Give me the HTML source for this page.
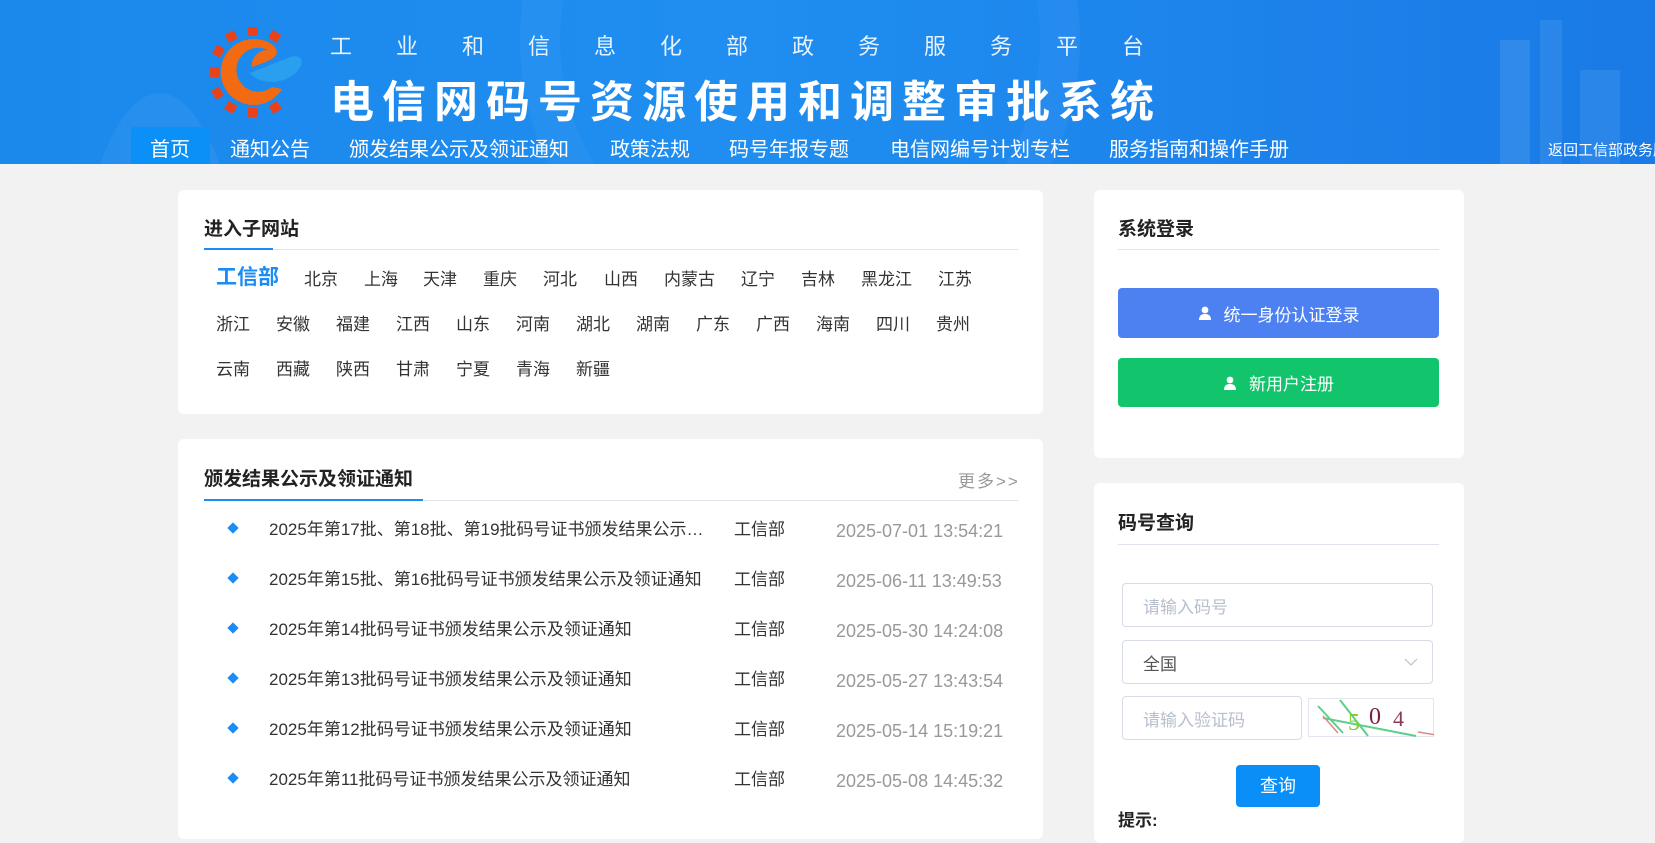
<!DOCTYPE html>
<html><head><meta charset="utf-8"><style>
*{margin:0;padding:0;box-sizing:border-box}
body{width:1655px;height:826px;overflow:hidden;background:#f2f2f2;font-family:"Liberation Sans","Noto Sans CJK SC",sans-serif;position:relative;color:#333}
.abs{position:absolute;white-space:nowrap}
.hdr{position:absolute;left:0;top:0;width:1655px;height:164px;background:linear-gradient(90deg,#1b88ec 0%,#1f8ef0 45%,#1a7ae6 100%)}
.nav{font-size:20px;color:#fff;top:133px}
.card{position:absolute;background:#fff;border-radius:6px}
.ct{font-size:19px;font-weight:bold;color:#222}
.rg{font-size:17px;color:#333}
.row{font-size:17px;color:#333}
.dt{color:#999;font-size:18px}
.dia{width:8px;height:8px;background:#1a8cf5;transform:rotate(45deg)}
.inp{position:absolute;border:1px solid #d6dbe6;border-radius:4px;background:#fff;font-size:17px;color:#b8bfcc;padding-left:20px;display:flex;align-items:center}
</style></head><body>
<div class="hdr">
  <svg class="abs" style="left:0;top:0" width="1655" height="164"><path d="M100 164 C130 80 180 60 220 164Z" fill="#3b9af2" opacity=".35"/><circle cx="800" cy="40" r="260" fill="none" stroke="#5fb0ff" stroke-opacity=".12" stroke-width="40"/><rect x="1500" y="40" width="30" height="124" fill="#6db5f5" opacity=".25"/><rect x="1540" y="20" width="22" height="144" fill="#6db5f5" opacity=".2"/><rect x="1580" y="70" width="40" height="94" fill="#6db5f5" opacity=".2"/></svg>
  <svg class="abs" style="left:210px;top:27px" width="96" height="90" viewBox="0 0 96 90">
    <g fill="#e8421a">
      <rect x="38" y="0" width="10" height="9"/><rect x="38" y="81" width="10" height="9"/><rect x="0" y="40" width="9" height="10"/>
      <rect x="16" y="5" width="10" height="9" transform="rotate(-30 21 9)"/><rect x="60" y="5" width="10" height="9" transform="rotate(30 65 9)"/>
      <rect x="3" y="20" width="10" height="9" transform="rotate(-60 8 24)"/><rect x="3" y="62" width="10" height="9" transform="rotate(60 8 66)"/>
      <rect x="16" y="76" width="10" height="9" transform="rotate(30 21 80)"/><rect x="60" y="76" width="10" height="9" transform="rotate(-30 65 80)"/>
    </g>
    <path d="M43 12 A33 33 0 1 0 72 62 L62 60 A22 22 0 1 1 60 24 C52 20 40 30 42 40 C52 36 62 34 66 28 C70 20 58 12 43 12Z" fill="#f26a12"/>
    <path d="M40 46 C55 40 70 34 80 30 C95 26 96 40 80 50 C66 58 48 56 40 46Z" fill="#2a9ff0"/>
  </svg>
  <div class="abs" style="left:330px;top:29px;font-size:22px;color:#e8f3ff;letter-spacing:44px">工业和信息化部政务服务平台</div>
  <div class="abs" style="left:330px;top:66px;font-size:44px;font-weight:bold;color:#fff;letter-spacing:8px">电信网码号资源使用和调整审批系统</div>
  <div class="abs" style="left:131px;top:127px;width:79px;height:37px;background:#0b90f7;border-radius:4px 4px 0 0"></div>
  <div class="abs nav" style="left:150px">首页</div>
  <div class="abs nav" style="left:230px">通知公告</div>
  <div class="abs nav" style="left:349px">颁发结果公示及领证通知</div>
  <div class="abs nav" style="left:610px">政策法规</div>
  <div class="abs nav" style="left:729px">码号年报专题</div>
  <div class="abs nav" style="left:890px">电信网编号计划专栏</div>
  <div class="abs nav" style="left:1109px">服务指南和操作手册</div>
  <div class="abs" style="left:1548px;top:139px;font-size:15px;color:#fff">返回工信部政务服务</div>
</div>

<div class="card" style="left:178px;top:190px;width:865px;height:224px"></div>
<div class="abs ct" style="left:204px;top:214px">进入子网站</div>
<div class="abs" style="left:204px;top:249px;width:814px;height:1px;background:#dfe4ec"></div>
<div class="abs" style="left:204px;top:248px;width:69px;height:2px;background:#1a8cf5"></div>
<div class="abs" style="left:216px;top:261px;font-size:21px;font-weight:bold;color:#1a8cf5">工信部</div>
<div class="abs rg" style="left:304px;top:265px">北京</div><div class="abs rg" style="left:364px;top:265px">上海</div><div class="abs rg" style="left:423px;top:265px">天津</div><div class="abs rg" style="left:483px;top:265px">重庆</div><div class="abs rg" style="left:543px;top:265px">河北</div><div class="abs rg" style="left:604px;top:265px">山西</div><div class="abs rg" style="left:664px;top:265px">内蒙古</div><div class="abs rg" style="left:741px;top:265px">辽宁</div><div class="abs rg" style="left:801px;top:265px">吉林</div><div class="abs rg" style="left:861px;top:265px">黑龙江</div><div class="abs rg" style="left:938px;top:265px">江苏</div>
<div class="abs rg" style="left:216px;top:310px">浙江</div><div class="abs rg" style="left:276px;top:310px">安徽</div><div class="abs rg" style="left:336px;top:310px">福建</div><div class="abs rg" style="left:396px;top:310px">江西</div><div class="abs rg" style="left:456px;top:310px">山东</div><div class="abs rg" style="left:516px;top:310px">河南</div><div class="abs rg" style="left:576px;top:310px">湖北</div><div class="abs rg" style="left:636px;top:310px">湖南</div><div class="abs rg" style="left:696px;top:310px">广东</div><div class="abs rg" style="left:756px;top:310px">广西</div><div class="abs rg" style="left:816px;top:310px">海南</div><div class="abs rg" style="left:876px;top:310px">四川</div><div class="abs rg" style="left:936px;top:310px">贵州</div>
<div class="abs rg" style="left:216px;top:355px">云南</div><div class="abs rg" style="left:276px;top:355px">西藏</div><div class="abs rg" style="left:336px;top:355px">陕西</div><div class="abs rg" style="left:396px;top:355px">甘肃</div><div class="abs rg" style="left:456px;top:355px">宁夏</div><div class="abs rg" style="left:516px;top:355px">青海</div><div class="abs rg" style="left:576px;top:355px">新疆</div>

<div class="card" style="left:178px;top:439px;width:865px;height:400px"></div>
<div class="abs ct" style="left:204px;top:464px">颁发结果公示及领证通知</div>
<div class="abs" style="left:958px;top:467px;font-size:17px;color:#999;letter-spacing:2px">更多&gt;&gt;</div>
<div class="abs" style="left:204px;top:500px;width:814px;height:1px;background:#dfe4ec"></div>
<div class="abs" style="left:204px;top:499px;width:219px;height:2px;background:#1a8cf5"></div>

<div class="abs dia" style="left:229px;top:524px"></div><div class="abs row" style="left:269px;top:515px">2025年第17批、第18批、第19批码号证书颁发结果公示…</div><div class="abs row" style="left:734px;top:515px">工信部</div><div class="abs dt" style="left:836px;top:521px">2025-07-01 13:54:21</div>
<div class="abs dia" style="left:229px;top:574px"></div><div class="abs row" style="left:269px;top:565px">2025年第15批、第16批码号证书颁发结果公示及领证通知</div><div class="abs row" style="left:734px;top:565px">工信部</div><div class="abs dt" style="left:836px;top:571px">2025-06-11 13:49:53</div>
<div class="abs dia" style="left:229px;top:624px"></div><div class="abs row" style="left:269px;top:615px">2025年第14批码号证书颁发结果公示及领证通知</div><div class="abs row" style="left:734px;top:615px">工信部</div><div class="abs dt" style="left:836px;top:621px">2025-05-30 14:24:08</div>
<div class="abs dia" style="left:229px;top:674px"></div><div class="abs row" style="left:269px;top:665px">2025年第13批码号证书颁发结果公示及领证通知</div><div class="abs row" style="left:734px;top:665px">工信部</div><div class="abs dt" style="left:836px;top:671px">2025-05-27 13:43:54</div>
<div class="abs dia" style="left:229px;top:724px"></div><div class="abs row" style="left:269px;top:715px">2025年第12批码号证书颁发结果公示及领证通知</div><div class="abs row" style="left:734px;top:715px">工信部</div><div class="abs dt" style="left:836px;top:721px">2025-05-14 15:19:21</div>
<div class="abs dia" style="left:229px;top:774px"></div><div class="abs row" style="left:269px;top:765px">2025年第11批码号证书颁发结果公示及领证通知</div><div class="abs row" style="left:734px;top:765px">工信部</div><div class="abs dt" style="left:836px;top:771px">2025-05-08 14:45:32</div>

<div class="card" style="left:1094px;top:190px;width:370px;height:268px"></div>
<div class="abs ct" style="left:1118px;top:214px">系统登录</div>
<div class="abs" style="left:1118px;top:249px;width:321px;height:1px;background:#dfe4ec"></div>
<div class="abs" style="left:1118px;top:288px;width:321px;height:50px;background:#4d80f0;border-radius:4px;color:#fff;font-size:17px;display:flex;align-items:center;justify-content:center"><svg width="14" height="14" viewBox="0 0 14 14" style="margin-right:12px"><circle cx="7" cy="4" r="3.4" fill="#fff"/><path d="M1 14C1 9 4 8 7 8S13 9 13 14Z" fill="#fff"/></svg>统一身份认证登录</div>
<div class="abs" style="left:1118px;top:358px;width:321px;height:49px;background:#12c46b;border-radius:4px;color:#fff;font-size:17px;display:flex;align-items:center;justify-content:center"><svg width="14" height="14" viewBox="0 0 14 14" style="margin-right:12px"><circle cx="7" cy="4" r="3.4" fill="#fff"/><path d="M1 14C1 9 4 8 7 8S13 9 13 14Z" fill="#fff"/></svg>新用户注册</div>

<div class="card" style="left:1094px;top:483px;width:370px;height:360px"></div>
<div class="abs ct" style="left:1118px;top:508px">码号查询</div>
<div class="abs" style="left:1118px;top:544px;width:321px;height:1px;background:#dfe4ec"></div>
<div class="inp" style="left:1122px;top:583px;width:311px;height:44px">请输入码号</div>
<div class="inp" style="left:1122px;top:640px;width:311px;height:44px;color:#555">全国<svg class="abs" style="right:14px;top:17px" width="14" height="9"><path d="M1 1L7 7L13 1" fill="none" stroke="#c0c7d3" stroke-width="1.3"/></svg></div>
<div class="inp" style="left:1122px;top:696px;width:180px;height:44px">请输入验证码</div>
<svg class="abs" style="left:1308px;top:698px" width="126" height="39" viewBox="0 0 126 39"><rect x=".5" y=".5" width="125" height="38" fill="#fff" stroke="#e2e6ee"/><path d="M10 8L35 35M32 2L60 38M15 20L108 38" stroke="#5ccf8a" stroke-width="2"/><path d="M15 18L30 35M110 34L128 37" stroke="#d88" stroke-width="1.5"/><text x="40" y="32" font-size="24" fill="#7bd02a" font-family="Liberation Serif">5</text><text x="61" y="26" font-size="24" fill="#7a1f3e" font-family="Liberation Serif">0</text><text x="85" y="28" font-size="22" fill="#8a3a5a" font-family="Liberation Serif">4</text></svg>
<div class="abs" style="left:1236px;top:765px;width:84px;height:42px;background:#0a8ff8;border-radius:4px;color:#fff;font-size:18px;text-align:center;line-height:42px">查询</div>
<div class="abs" style="left:1118px;top:806px;font-size:17px;font-weight:bold;color:#222">提示:</div>
</body></html>
